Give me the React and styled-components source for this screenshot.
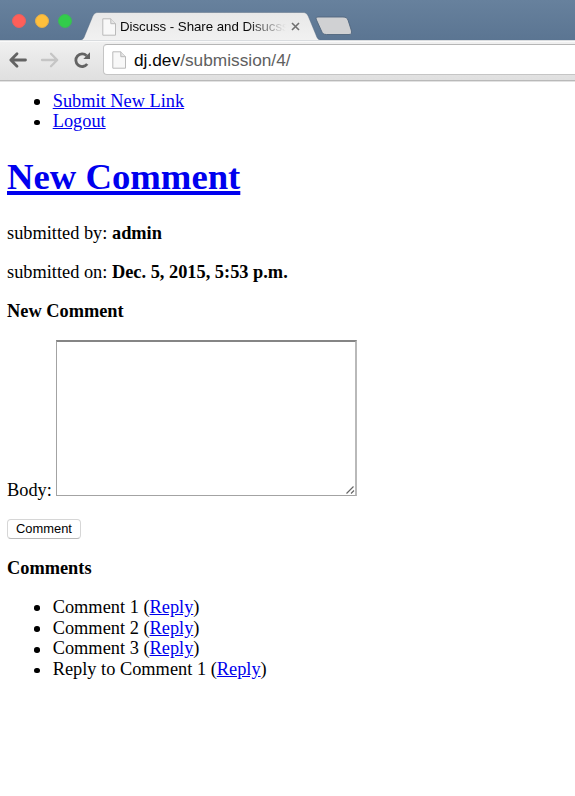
import React from 'react';
import styled, { createGlobalStyle } from 'styled-components';

const GlobalStyle = createGlobalStyle`
  *, *::before, *::after { box-sizing: border-box; }
  html, body { margin: 0; background: #fff; }
  body { overflow: hidden; }
`;

const Window = styled.div`
  width: 575px;
  height: 796px;
  overflow: hidden;
  background: #fff;
`;

const TabStrip = styled.div`
  display: flex;
  height: 40px;
  background: linear-gradient(#67819d, #5b7592);
`;

const Lights = styled.div`
  display: flex;
  gap: 9px;
  width: 81px;
  padding: 13.5px 0 0 11.5px;
`;

const Light = styled.span`
  width: 14px;
  height: 14px;
  border-radius: 50%;
  border: 1px solid ${(p) => p.$edge};
  background: ${(p) => p.$color};
`;

const Tab = styled.div`
  position: relative;
  display: flex;
  width: 240px;
  height: 40px;
  padding: 18px 0 0 21px;
`;

const TabShape = styled.svg`
  position: absolute;
  left: 0;
  top: 0;
`;

const TabIcon = styled.span`
  position: relative;
  width: 18px;
  height: 17px;
  line-height: 0;
`;

const TabTitle = styled.span`
  position: relative;
  width: 168px;
  height: 17px;
  white-space: nowrap;
  font: 13.3px/17px 'Liberation Sans', Arial, sans-serif;
  letter-spacing: -0.05px;
  color: transparent;
  background: linear-gradient(90deg, #080808 126px, rgba(17, 17, 17, 0) 166px);
  background-clip: text;
  -webkit-background-clip: text;
`;

const CloseIcon = styled.svg`
  position: relative;
  margin: 4px 0 0 3px;
`;

const NewTab = styled.svg`
  position: relative;
  margin: 16px 0 0 -6px;
`;

const Toolbar = styled.div`
  display: flex;
  height: 42px;
  padding-top: 4px;
  border-bottom: 1px solid #e2e2e2;
  background: linear-gradient(#f1f1f1, #dfdfdf);
  box-shadow: inset 0 1px 0 #d9dcdf, inset 0 2px 0 #fafafa, inset 0 -1px 0 #b9b9b9;
`;

const NavIcons = styled.svg`
  flex: none;
  width: 103px;
  height: 32px;
`;

const AddressBar = styled.div`
  display: flex;
  flex: 1;
  height: 31px;
  padding: 5px 0 0 8px;
  border: 1px solid #c5c5c5;
  border-top-color: #b6b6b6;
  border-right: 0;
  border-radius: 4px 0 0 4px;
  background: #fff;
  font: 17.3px/20px 'Liberation Sans', Arial, sans-serif;
  color: #606060;
`;

const AddressIcon = styled.span`
  width: 22px;
  padding-top: 1px;
  line-height: 0;
`;

const Host = styled.span`
  color: #080808;
`;

const Page = styled.main`
  padding: 8.5px 7px 0;
  font: 18.35px/20.75px 'Liberation Serif', 'Times New Roman', serif;
  color: #000;
`;

const List = styled.ul`
  margin: 0 0 ${(p) => p.$after || 0}px;
  padding-left: 45.7px;
  list-style: none;
`;

const ListItem = styled.li`
  position: relative;

  &::before {
    content: '';
    position: absolute;
    left: -18.3px;
    top: 8.5px;
    width: 5.6px;
    height: 5.6px;
    border-radius: 50%;
    background: #000;
  }
`;

const Link = styled.a`
  color: #00e;
  text-decoration: underline;
`;

const Title = styled.h1`
  margin: 0 0 25px;
  font-size: 36.7px;
  line-height: 42px;

  a { text-decoration-thickness: 4px; }
`;

const Paragraph = styled.p`
  margin: 0 0 18.25px;
`;

const Heading = styled.h4`
  margin: 0 0 ${(p) => p.$after}px;
  font-size: inherit;
`;

const Field = styled.label`
  display: flex;
  align-items: flex-end;
  gap: 4px;
  height: 160px;
  margin-bottom: 19px;
`;

const FieldLabel = styled.span`
  width: 45px;
  white-space: nowrap;
`;

const TextBox = styled.div`
  display: flex;
  align-items: flex-end;
  justify-content: flex-end;
  align-self: flex-start;
  width: 301px;
  height: 156px;
  border: 1px solid #a3a3a3;
  border-top: 2px solid #858585;
  border-right: 2px solid #b9b9b9;
`;

const SubmitButton = styled.button`
  display: block;
  width: 74px;
  height: 20px;
  margin: 0 0 18.7px;
  padding: 0;
  border: 1px solid #d6d6d6;
  border-bottom-color: #b9b9b9;
  border-radius: 4px;
  background: #fff;
  font: 12.9px/18px 'Liberation Sans', Arial, sans-serif;
  color: #000;
`;

function PageIcon() {
  return (
    <svg width="15" height="18" viewBox="0 0 15 18" fill="#f8f8f8" stroke="#bababa">
      <path d="M.8.8h8l4.700 4.900v11.500H.8Z" />
      <path d="M8.800.8v4.900h4.700" fill="#e5e5e5" />
    </svg>
  );
}

function Navigation() {
  return (
    <NavIcons viewBox="0 0 103 32" fill="none" strokeWidth="2.8">
      <g stroke="#636363">
        <path d="M11.200 16h14.300M17 9.800 10.800 16l6.200 6.200" strokeLinecap="round" strokeLinejoin="round" />
        <path d="M87.200 20a6.300 6.300 0 1 1-.6-8.200" />
        <path d="M90 8.200v6.700h-6.700Z" fill="#636363" stroke="none" />
      </g>
      <path d="M42 16h14.500M51 9.800l6.200 6.200-6.200 6.200" stroke="#c5c5c5" strokeWidth="2.300" strokeLinecap="round" strokeLinejoin="round" />
    </NavIcons>
  );
}

function BrowserChrome() {
  return (
    <header>
      <TabStrip>
        <Lights>
          <Light $color="#ff5f59" $edge="#e9605e" />
          <Light $color="#ffbf3c" $edge="#e3ae4b" />
          <Light $color="#32cc4b" $edge="#3db75a" />
        </Lights>
        <Tab>
          <TabShape width="242" height="40" viewBox="0 0 242 40">
            <defs>
              <linearGradient id="tabFill" x2="0" y2="1">
                <stop stopColor="#e8e8e8" />
                <stop offset="1" stopColor="#f1f1f1" />
              </linearGradient>
            </defs>
            <path d="M0 40c2-.5 3-2 4-5l7-17c1.500-4 3-5.500 6-5.500h205c3 0 4.500 1.500 6 5.500l7 17c1 3 2 4.500 4 5Z" fill="url(#tabFill)" />
            <path d="M0 40c2-.5 3-2 4-5l7-17c1.500-4 3-5.500 6-5.500h205c3 0 4.500 1.500 6 5.500l7 17c1 3 2 4.500 4 5" fill="none" stroke="#52677f" strokeOpacity=".55" strokeWidth=".8" />
          </TabShape>
          <TabIcon><PageIcon /></TabIcon>
          <TabTitle>Discuss - Share and Disucss</TabTitle>
          <CloseIcon width="9" height="9" viewBox="0 0 9 9">
            <path d="m1 1 7 7M8 1 1 8" stroke="#707070" strokeWidth="1.600" />
          </CloseIcon>
        </Tab>
        <NewTab width="38" height="20" viewBox="0 0 38 20">
          <path d="M3 1h25c3 0 4 1 5 3l3.200 10c.8 3 .2 4.500-2.200 4.500H11.500c-3 0-4-1-5-3.500L1.500 4C.7 2 1 1 3 1Z" fill="#d0d1d3" stroke="#50657d" strokeWidth=".9" />
        </NewTab>
      </TabStrip>
      <Toolbar>
        <Navigation />
        <AddressBar>
          <AddressIcon><PageIcon /></AddressIcon>
          <Host>dj.dev</Host>/submission/4/
        </AddressBar>
      </Toolbar>
    </header>
  );
}

const comments = ['Comment 1', 'Comment 2', 'Comment 3', 'Reply to Comment 1'];

export default function App() {
  return (
    <Window>
      <GlobalStyle />
      <BrowserChrome />
      <Page>
        <List $after={24}>
          <ListItem><Link href="#">Submit New Link</Link></ListItem>
          <ListItem><Link href="#">Logout</Link></ListItem>
        </List>
        <Title><Link href="#">New Comment</Link></Title>
        <Paragraph>submitted by: <b>admin</b></Paragraph>
        <Paragraph>submitted on: <b>Dec. 5, 2015, 5:53 p.m.</b></Paragraph>
        <Heading $after={18.5}>New Comment</Heading>
        <Field>
          <FieldLabel>Body:</FieldLabel>
          <TextBox>
            <svg width="10" height="10" viewBox="0 0 10 10">
              <path d="m1.500 8.500 7-7M6 8.500l3-3" stroke="#666" strokeWidth="1.200" />
            </svg>
          </TextBox>
        </Field>
        <SubmitButton>Comment</SubmitButton>
        <Heading $after={18.25}>Comments</Heading>
        <List>
          {comments.map((text) => (
            <ListItem key={text}>{text} (<Link href="#">Reply</Link>)</ListItem>
          ))}
        </List>
      </Page>
    </Window>
  );
}
